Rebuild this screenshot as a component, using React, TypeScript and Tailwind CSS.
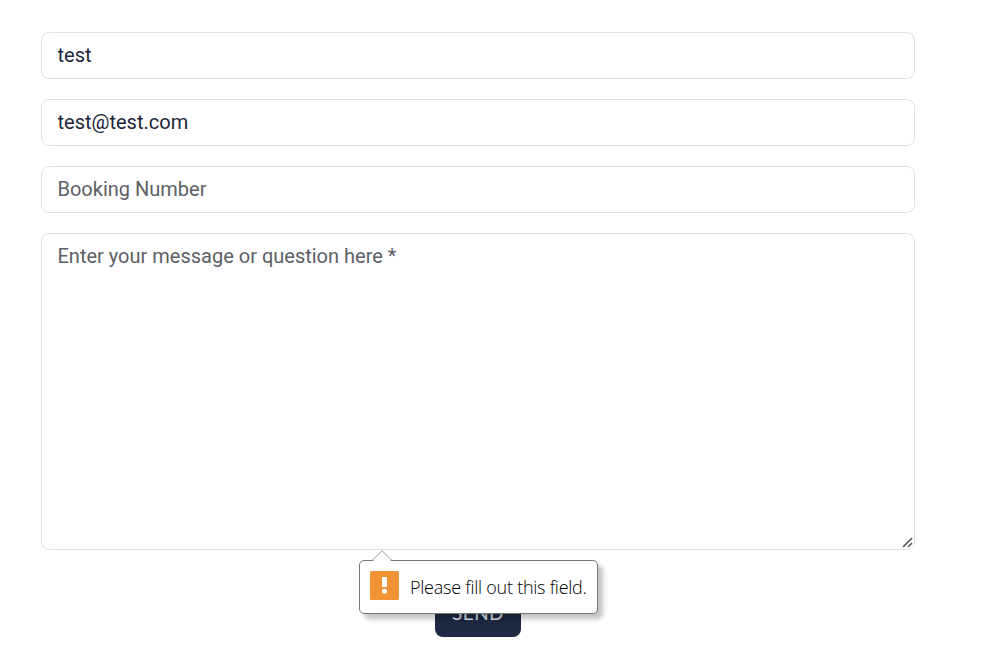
import React from "react";

const field =
  "block w-full rounded-[8px] border border-[#dee2e6] bg-white px-[15.5px] font-['Roboto',sans-serif] text-[20px] leading-[30px] text-[#212539] placeholder:text-[#5c6065] placeholder:opacity-100 outline-none";

function ValidationBubble() {
  return (
    <div className="absolute left-[-76px] top-[-21px] flex h-[54px] w-[239px] items-center rounded-[5px] border border-[#767676] bg-white pl-[10px] shadow-[5px_5px_5px_rgba(0,0,0,0.24)]">
      <svg className="absolute left-[11px] top-[-11px]" width="22" height="12" viewBox="0 0 22 12">
        <path d="M1 12L11 1L21 12Z" fill="white" />
        <path d="M1 10.5L11 0.7L21 10.5" fill="none" stroke="#999" strokeWidth="1" />
      </svg>
      <svg className="relative top-[-2px] shrink-0" width="29" height="29" viewBox="0 0 29 29">
        <rect width="29" height="29" rx="1.5" fill="#f19335" />
        <path d="M12 6H17V16H12Z" fill="white" />
        <circle cx="14.5" cy="20.3" r="2.5" fill="white" />
      </svg>
      <span className="ml-[11px] whitespace-nowrap font-['Open_Sans',sans-serif] text-[18px] font-light leading-6 tracking-[-0.25px] text-black">
        Please fill out this field.
      </span>
    </div>
  );
}

export default function App() {
  return (
    <main className="h-[672px] w-full overflow-hidden bg-white pl-[41px] pt-8">
      <form className="flex w-[874px] flex-col gap-5" noValidate>
        <input className={`${field} h-[47px] pb-[2px]`} type="text" defaultValue="test" />
        <input className={`${field} h-[47px] pb-[2px]`} type="email" defaultValue="test@test.com" />
        <input className={`${field} h-[47px] pb-[2px]`} type="text" placeholder="Booking Number" />
        <div className="relative">
          <textarea className={`${field} h-[317px] resize-none py-[7px]`} placeholder="Enter your message or question here *" />
          <svg className="absolute bottom-[2px] right-[2px]" width="11" height="11" viewBox="0 0 11 11">
            <path d="M1 10L10 1M6 10L10 6" fill="none" stroke="#555" strokeWidth="1.7" />
          </svg>
        </div>
        <div className="relative mt-[11px] h-[56px] w-[86px] self-center">
          <button
            type="button"
            className="flex h-[56px] w-[86px] items-center justify-center rounded-[8px] bg-[#1d2942] pt-[7px] font-['Lato',sans-serif] text-[19px] font-normal leading-6 tracking-[0.4px] text-[#dfe5ea]"
          >
            SEND
          </button>
          <ValidationBubble />
        </div>
      </form>
    </main>
  );
}
